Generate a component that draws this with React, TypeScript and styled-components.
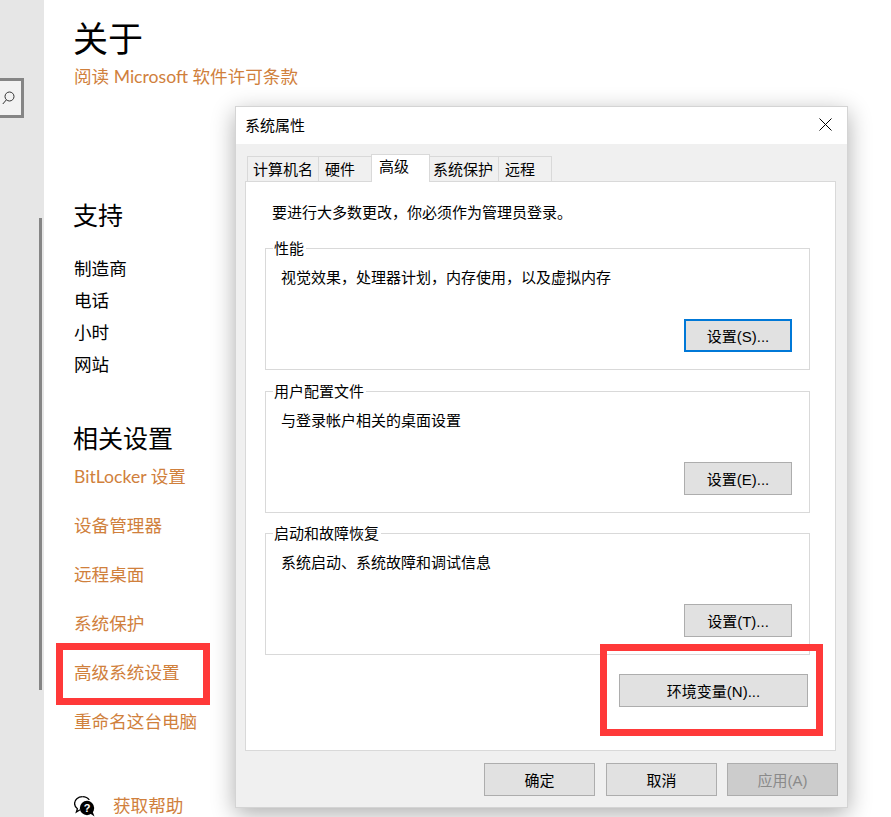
import styled, { createGlobalStyle } from "styled-components";

const GlobalStyle = createGlobalStyle`
  html, body {
    margin: 0;
    padding: 0;
    background: #fff;
    overflow: hidden;
  }
  body {
    font-family: Lato, "Noto Sans CJK SC", sans-serif;
    color: #000;
  }
`;

const Page = styled.div`
  position: relative;
  width: 891px;
  height: 817px;
  overflow: hidden;
  display: flex;
`;

const Rail = styled.div`
  position: relative;
  width: 44px;
  flex-shrink: 0;
  background: #e6e6e6;
  padding-top: 78px;
  box-sizing: border-box;
`;

const SearchBox = styled.div`
  width: 24px;
  height: 40px;
  box-sizing: border-box;
  border: 3px solid #858585;
  border-left: 0;
  background: #f2f2f2;
  display: flex;
  align-items: center;
  justify-content: flex-end;
  padding-right: 6px;
  overflow: hidden;
`;

const Scrollbar = styled.div`
  position: absolute;
  left: 39px;
  top: 218px;
  width: 3px;
  height: 472px;
  background: #858585;
`;

const Content = styled.main`
  flex: 1;
  padding: 13px 0 0 30px;
`;

const Title = styled.h1`
  margin: 0 0 0 -1px;
  font-size: 35px;
  line-height: 50px;
  font-weight: 400;
`;

const SectionTitle = styled.h2<{ $top: number }>`
  margin: ${(p) => p.$top}px 0 0 -1px;
  font-size: 25px;
  line-height: 36px;
  font-weight: 400;
`;

const OrangeLink = styled.div`
  font-size: 17.6px;
  line-height: 28px;
  color: #d0803c;
  white-space: nowrap;
`;

const InfoList = styled.div`
  margin-top: 22px;
  display: flex;
  flex-direction: column;
  gap: 4px;
`;

const InfoItem = styled.div`
  font-size: 17.6px;
  line-height: 28px;
`;

const LinkList = styled.div`
  margin-top: 7px;
  display: flex;
  flex-direction: column;
  gap: 21px;
`;

const HelpRow = styled.div`
  margin-top: 56px;
  display: flex;
  align-items: center;
  gap: 18px;
`;

const Dialog = styled.section`
  position: absolute;
  left: 235px;
  top: 106px;
  width: 613px;
  height: 702px;
  box-sizing: border-box;
  background: #f0f0f0;
  border: 1px solid #d4d4d4;
  box-shadow: 0 6px 22px rgba(0, 0, 0, 0.32);
  display: flex;
  flex-direction: column;
  font-family: "Liberation Sans", "Noto Sans CJK SC", sans-serif;
`;

const TitleBar = styled.header`
  height: 37px;
  flex-shrink: 0;
  box-sizing: border-box;
  padding: 0 15px 2px 9px;
  background: #fff;
  display: flex;
  align-items: center;
  justify-content: space-between;
  font-size: 15px;
`;

const Tabs = styled.div`
  display: flex;
  align-items: flex-end;
  height: 37px;
  flex-shrink: 0;
  padding-left: 12px;
`;

const Tab = styled.div<{ $active?: boolean; $width: number; $pad: number }>`
  width: ${(p) => p.$width}px;
  height: ${(p) => (p.$active ? 28 : 25)}px;
  box-sizing: border-box;
  padding-left: ${(p) => p.$pad}px;
  border: 1px solid #d9d9d9;
  border-bottom: 0;
  margin-left: -1px;
  background: ${(p) => (p.$active ? "#fff" : "#f0f0f0")};
  font-size: 15px;
  line-height: ${(p) => (p.$active ? 24 : 26)}px;
  white-space: nowrap;
  position: relative;
  z-index: ${(p) => (p.$active ? 1 : 0)};
  margin-bottom: ${(p) => (p.$active ? -1 : 0)}px;
`;

const TabPanel = styled.div`
  width: 591px;
  height: 570px;
  margin-left: 9px;
  box-sizing: border-box;
  background: #fff;
  border: 1px solid #d9d9d9;
  padding: 19px 26px 0 19px;
  flex-shrink: 0;
`;

const Notice = styled.div`
  padding-left: 7px;
  font-size: 15px;
  line-height: 24px;
`;

const Group = styled.div<{ $top: number }>`
  margin-top: ${(p) => p.$top}px;
  height: 122px;
  width: 545px;
  box-sizing: border-box;
  border: 1px solid #d9d9d9;
  position: relative;
`;

const GroupLabel = styled.div`
  position: absolute;
  left: 7px;
  top: -10px;
  padding: 0 2px 0 1px;
  background: #fff;
  font-size: 15px;
  line-height: 20px;
`;

const GroupBody = styled.div`
  height: 100%;
  box-sizing: border-box;
  padding: 17px 17px 17px 15px;
  display: flex;
  flex-direction: column;
  justify-content: space-between;
  font-size: 15px;
  line-height: 24px;
`;

const Actions = styled.div`
  display: flex;
  justify-content: flex-end;
`;

const Button = styled.button<{ $focus?: boolean; $width?: number; $disabled?: boolean }>`
  width: ${(p) => p.$width ?? 108}px;
  height: 33px;
  box-sizing: border-box;
  padding: 0 0 1px;
  border: ${(p) => (p.$focus ? "2px solid #0078d7" : "1px solid #adadad")};
  border-radius: 0;
  background: ${(p) => (p.$disabled ? "#cccccc" : "#e1e1e1")};
  color: ${(p) => (p.$disabled ? "#8a8a8a" : "#000")};
  font-family: inherit;
  font-size: 15px;
`;

const EnvRow = styled.div`
  margin-top: 19px;
  display: flex;
  justify-content: flex-end;
  margin-right: 1px;
`;

const Footer = styled.footer`
  display: flex;
  justify-content: flex-end;
  gap: 11px;
  padding: 12px 9px 0 0;

  & > :last-child {
    margin-left: -1px;
  }
`;

const RedFrame = styled.div<{ $x: number; $y: number; $w: number; $h: number }>`
  position: absolute;
  left: ${(p) => p.$x}px;
  top: ${(p) => p.$y}px;
  width: ${(p) => p.$w}px;
  height: ${(p) => p.$h}px;
  box-sizing: border-box;
  border: 7px solid #ff3939;
  pointer-events: none;
`;

const SearchIcon = () => (
  <svg width="13" height="14" viewBox="0 0 13 14" fill="none" stroke="#333" strokeWidth="1">
    <circle cx="7.5" cy="5.5" r="4.5" />
    <path d="M4.4 8.8 0.8 13" />
  </svg>
);

const CloseIcon = () => (
  <svg width="13" height="13" viewBox="0 0 13 13" fill="none" stroke="#000" strokeWidth="1">
    <path d="M0.5 0.5 12.5 12.5M12.5 0.5 0.5 12.5" />
  </svg>
);

const HelpIcon = () => (
  <svg width="21" height="21" viewBox="0 0 21 21">
    <path
      d="M8.5 0.7C3.9 0.7 0.6 3.7 0.6 7.6c0 2.2 1.1 4 2.8 5.2L2.4 16l3.6-2.2"
      fill="none"
      stroke="#000"
      strokeWidth="1.3"
    />
    <path d="M8.5.7c3 0 5.4 1.3 6.8 3.3" fill="none" stroke="#000" strokeWidth="1.3" />
    <circle cx="13" cy="12" r="7.2" fill="#000" />
    <path d="M15 16.8 20.5 20.5 18 14z" fill="#000" />
    <text x="13" y="15.8" fontSize="11" fontWeight="700" textAnchor="middle" fill="#fff" fontFamily="Liberation Sans">
      ?
    </text>
  </svg>
);

const groups = [
  { label: "性能", text: "视觉效果，处理器计划，内存使用，以及虚拟内存", button: "设置(S)...", top: 23, focus: true },
  { label: "用户配置文件", text: "与登录帐户相关的桌面设置", button: "设置(E)...", top: 21 },
  { label: "启动和故障恢复", text: "系统启动、系统故障和调试信息", button: "设置(T)...", top: 20 },
];

const tabs = [
  { label: "计算机名", width: 72, pad: 5 },
  { label: "硬件", width: 54, pad: 6 },
  { label: "高级", width: 59, pad: 7 },
  { label: "系统保护", width: 70, pad: 3 },
  { label: "远程", width: 54, pad: 6 },
];

const App = () => {
  return (
    <Page>
      <GlobalStyle />
      <Rail>
        <SearchBox>
          <SearchIcon />
        </SearchBox>
        <Scrollbar />
      </Rail>
      <Content>
        <Title>关于</Title>
        <OrangeLink>阅读 Microsoft 软件许可条款</OrangeLink>
        <SectionTitle $top={106}>支持</SectionTitle>
        <InfoList>
          <InfoItem>制造商</InfoItem>
          <InfoItem>电话</InfoItem>
          <InfoItem>小时</InfoItem>
          <InfoItem>网站</InfoItem>
        </InfoList>
        <SectionTitle $top={41}>相关设置</SectionTitle>
        <LinkList>
          <OrangeLink>BitLocker 设置</OrangeLink>
          <OrangeLink>设备管理器</OrangeLink>
          <OrangeLink>远程桌面</OrangeLink>
          <OrangeLink>系统保护</OrangeLink>
          <OrangeLink>高级系统设置</OrangeLink>
          <OrangeLink>重命名这台电脑</OrangeLink>
        </LinkList>
        <HelpRow>
          <HelpIcon />
          <OrangeLink>获取帮助</OrangeLink>
        </HelpRow>
      </Content>

      <Dialog>
        <TitleBar>
          <span>系统属性</span>
          <CloseIcon />
        </TitleBar>
        <Tabs>
          {tabs.map((tab) => (
            <Tab key={tab.label} $active={tab.label === "高级"} $width={tab.width} $pad={tab.pad}>
              {tab.label}
            </Tab>
          ))}
        </Tabs>
        <TabPanel>
          <Notice>要进行大多数更改，你必须作为管理员登录。</Notice>
          {groups.map((group) => (
            <Group key={group.label} $top={group.top}>
              <GroupLabel>{group.label}</GroupLabel>
              <GroupBody>
                <div>{group.text}</div>
                <Actions>
                  <Button $focus={group.focus}>{group.button}</Button>
                </Actions>
              </GroupBody>
            </Group>
          ))}
          <EnvRow>
            <Button $width={189}>环境变量(N)...</Button>
          </EnvRow>
        </TabPanel>
        <Footer>
          <Button $width={111}>确定</Button>
          <Button $width={111}>取消</Button>
          <Button $width={111} $disabled>
            应用(A)
          </Button>
        </Footer>
      </Dialog>

      <RedFrame $x={56} $y={643} $w={154} $h={62} />
      <RedFrame $x={600} $y={644} $w={223} $h={92} />
    </Page>
  );
};

export default App;
